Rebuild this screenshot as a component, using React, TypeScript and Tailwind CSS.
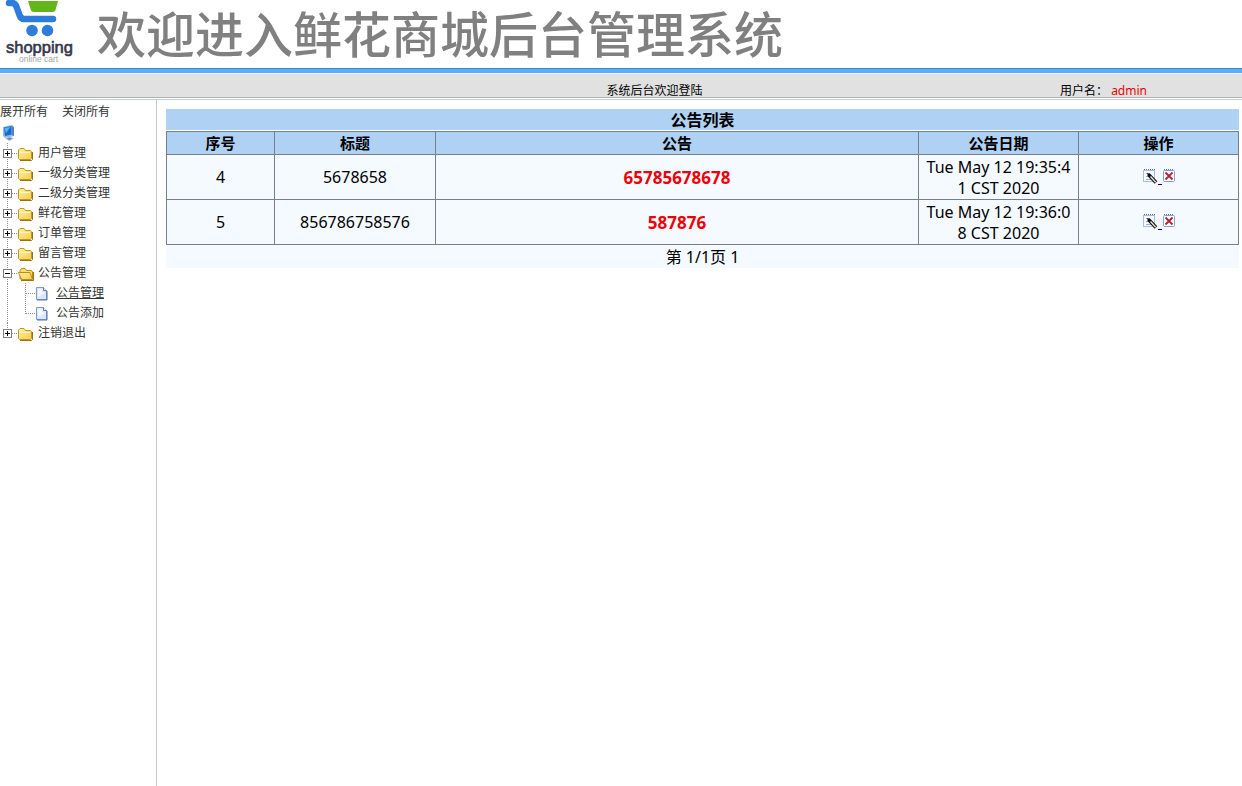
import { useState } from "react";

type Branch = { label: string; children?: { label: string; current?: boolean }[] };

const branches: Branch[] = [
  { label: "用户管理" },
  { label: "一级分类管理" },
  { label: "二级分类管理" },
  { label: "鲜花管理" },
  { label: "订单管理" },
  { label: "留言管理" },
  {
    label: "公告管理",
    children: [{ label: "公告管理", current: true }, { label: "公告添加" }],
  },
  { label: "注销退出" },
];

const notices = [
  { id: 4, title: "5678658", body: "65785678678", date: "Tue May 12 19:35:41 CST 2020" },
  { id: 5, title: "856786758576", body: "587876", date: "Tue May 12 19:36:08 CST 2020" },
];

function Logo() {
  return (
    <svg width="80" height="66" viewBox="0 0 80 66" role="img" aria-label="shopping online cart" className="shrink-0">
      <path d="M28 1H58L55.5 10Q55 12 52.500 12H34Q31.500 12 30.800 10Z" fill="#63b51c" />
      <path d="M9 3H12Q15 3 16.200 6L19.500 15Q20.700 19 24.500 19H53" fill="none" stroke="#2f7dda" strokeWidth="6.500" strokeLinecap="round" strokeLinejoin="round" />
      <circle cx="32" cy="30.500" r="5.800" fill="#2f7dda" />
      <circle cx="47.500" cy="30.500" r="5.800" fill="#2f7dda" />
      <text x="6" y="53" fontFamily="Liberation Sans, sans-serif" fontSize="16.5" fill="#33364d" stroke="#33364d" strokeWidth="0.600">shopping</text>
      <text x="19" y="61.500" fontFamily="Liberation Sans, sans-serif" fontSize="8.500" fill="#a4a4a8">online cart</text>
    </svg>
  );
}

function Computer() {
  return (
    <svg width="18" height="18" viewBox="0 0 18 18" aria-hidden="true">
      <path d="M5 15L9 12L14 14.500L10 17Z" fill="#b9c3cf" />
      <path d="M3 3L12 1L14 3V12L5 14L3 12Z" fill="#8eb9e8" />
      <path d="M4 3.500L11.500 2V10.500L5 12Z" fill="#1769d2" />
      <path d="M4.500 4L10.500 3L6 9Z" fill="#52b3fa" />
      <path d="M12 2L14 3.500V12L12 11Z" fill="#5683b6" />
      <path d="M7 14.500L10 13.500L12 14.500L9 16Z" fill="#6686a8" />
    </svg>
  );
}

function Connector({ open, last }: { open: boolean; last: boolean }) {
  return (
    <svg width="18" height="20" viewBox="0 0 18 20" aria-hidden="true" shapeRendering="crispEdges">
      <path d={last ? "M7.500 0V6" : "M7.500 0V20"} stroke="#909090" strokeDasharray="1 1" />
      <path d="M12 10.500H18" stroke="#909090" strokeDasharray="1 1" />
      <rect x="3.500" y="6.500" width="8" height="8" fill="#fff" stroke="#808080" />
      <path d={open ? "M5 10.500H10" : "M5 10.500H10M7.500 8V13"} stroke="#000" />
    </svg>
  );
}

function Folder({ open }: { open: boolean }) {
  return (
    <svg width="18" height="17" viewBox="0 0 18 17" aria-hidden="true" className="mt-[3px]">
      <defs>
        <linearGradient id="folder" x1="0" y1="0" x2="1" y2="1">
          <stop stopColor="#fff3a6" />
          <stop offset="1" stopColor="#f7ca48" />
        </linearGradient>
      </defs>
      {open ? (
        <>
          <path d="M2 13V4.500L3.500 2.500H7L8.500 4.500H13.500L14.500 6V13Z" fill="#f9dc6e" stroke="#b98a1b" />
          <path d="M0.500 6.500H12L14.500 13.500H3.500Z" fill="url(#folder)" stroke="#bd8d17" />
          <path d="M3 14.500H15.500V6" fill="none" stroke="#9b7411" />
        </>
      ) : (
        <>
          <path d="M0.500 12.500V4L2 2.500H6L7.500 4.500H12.500L13.500 5.500V12.500L12.500 13.500H1.500Z" fill="url(#folder)" stroke="#c39724" />
          <path d="M1.500 6.500H12" stroke="#fff7c2" />
          <path d="M2 14.500H13.500L14.500 13.500V6" fill="none" stroke="#947018" />
        </>
      )}
    </svg>
  );
}

function PageLeaf({ last }: { last: boolean }) {
  return (
    <svg width="32" height="20" viewBox="18 0 32 20" aria-hidden="true">
      <g shapeRendering="crispEdges" stroke="#909090" strokeDasharray="1 1">
        <path d={last ? "M25.500 0V11" : "M25.500 0V20"} />
        <path d="M26 10.500H36" />
      </g>
      <path d="M36.500 4.500H43.500L46.500 7.500V16.500H36.500Z" fill="#dce9fc" stroke="#7d99cf" />
      <path d="M38 6H42V9L45 10L38 14Z" fill="#f5f9ff" />
      <path d="M43.500 4.500V7.500H46.500" fill="#fff" stroke="#5a76af" />
      <path d="M37 17H47V8" fill="none" stroke="#5873ab" />
    </svg>
  );
}

function EditIcon() {
  return (
    <svg width="16" height="16" viewBox="0 0 16 16" aria-hidden="true">
      <rect x="1.500" y="2.500" width="11" height="11" fill="#f8fbff" stroke="#a9bbdf" />
      <path d="M2 1.500H13" stroke="#5873a9" strokeDasharray="1 1" />
      <path d="M4 5.500H8M4 8.500H7M4 11.500H9" stroke="#9eacc9" />
      <path d="M6.500 6.500L14 14.500" stroke="#111" strokeWidth="3.500" />
      <path d="M8.500 8.600L13.700 14.200" stroke="#e0e0d8" strokeWidth="1.500" />
      <path d="M5 5L8 6L6 8Z" fill="#111" />
    </svg>
  );
}

function DeleteIcon() {
  return (
    <svg width="14" height="16" viewBox="0 0 14 16" aria-hidden="true">
      <rect x="1.500" y="2.500" width="11" height="11" rx="1" fill="#fff" stroke="#87a0d4" />
      <path d="M2 1.500H12" stroke="#5873a9" strokeDasharray="1 1" />
      <path d="M3.500 4.500L10.500 11.500M10.500 4.500L3.500 11.500" stroke="#b72032" strokeWidth="1.800" />
    </svg>
  );
}

export default function App() {
  const [open, setOpen] = useState<string[]>(["公告管理"]);
  const toggle = (label: string) =>
    setOpen((now) => (now.includes(label) ? now.filter((l) => l !== label) : [...now, label]));

  return (
    <div className="flex min-h-screen flex-col bg-white font-['Noto_Sans','Noto_Sans_CJK_SC',sans-serif] text-black">
      <header>
        <div className="flex h-[68px]">
          <Logo />
          <h1 className="ml-[17px] whitespace-nowrap font-['Noto_Sans_CJK_SC',sans-serif] text-[49px] leading-[64px] font-medium text-[#808080]">
            欢迎进入鲜花商城后台管理系统
          </h1>
        </div>
        <div className="h-[5px] border-t border-[#4886c5] bg-[#5aaef5]" />
        <div className="grid h-[25px] grid-cols-[1fr_182px] border-t border-b border-t-[#eef3f6] border-b-[#b0b0b0] bg-[#e1e1e1] text-xs leading-[34px]">
          <p className="pl-[249px] text-center">系统后台欢迎登陆</p>
          <p>
            用户名： <span className="text-[#f00000]">admin</span>
          </p>
        </div>
        <div className="mt-px h-px bg-[#c8cdd0]" />
      </header>

      <div className="flex grow">
        <nav className="w-[157px] shrink-0 border-r border-[#c8c8c8] pt-1 text-xs text-[#333]">
          <div className="flex h-5 gap-3.5 leading-4">
            <button type="button" className="h-4" onClick={() => setOpen(branches.map((b) => b.label))}>展开所有</button>
            <button type="button" className="h-4" onClick={() => setOpen([])}>关闭所有</button>
          </div>
          <Computer />
          <ul className="pt-px">
            {branches.map((branch, i) => {
              const expanded = open.includes(branch.label);
              return (
                <li key={branch.label}>
                  <div className="flex h-5">
                    <button type="button" aria-label={branch.label} aria-expanded={expanded} onClick={() => toggle(branch.label)}>
                      <Connector open={expanded} last={i === branches.length - 1} />
                    </button>
                    <Folder open={expanded} />
                    <a href="#" className="ml-0.5 leading-5">{branch.label}</a>
                  </div>
                  {expanded && branch.children && (
                    <ul className="ml-[7px] border-l border-dotted border-[#909090] pl-2.5">
                      {branch.children.map((leaf, j) => (
                        <li key={leaf.label} className="flex h-5">
                          <PageLeaf last={j === branch.children!.length - 1} />
                          <a href="#" className={leaf.current ? "ml-1.5 leading-5 underline" : "ml-1.5 leading-5"}>
                            {leaf.label}
                          </a>
                        </li>
                      ))}
                    </ul>
                  )}
                </li>
              );
            })}
          </ul>
        </nav>

        <main className="min-w-0 grow pt-[9px] pr-[3px] pl-[9px]">
          <h2 className="mb-px h-[21px] bg-[#afd1f3] text-center leading-[22px] font-bold">公告列表</h2>
          <table className="w-full table-fixed border-collapse bg-[#f4faff] text-center">
            <thead>
              <tr className="h-[23px] bg-[#afd1f3] text-[15px] leading-[22px]">
                <th className="w-[108px] border border-[#778088] p-0">序号</th>
                <th className="w-[161px] border border-[#778088] p-0">标题</th>
                <th className="border border-[#778088] p-0">公告</th>
                <th className="w-[160px] border border-[#778088] p-0">公告日期</th>
                <th className="w-[160px] border border-[#778088] p-0">操作</th>
              </tr>
            </thead>
            <tbody>
              {notices.map((n) => (
                <tr key={n.id} className="h-[45px] leading-[21px]">
                  <td className="border border-[#778088] p-0">{n.id}</td>
                  <td className="border border-[#778088] p-0">{n.title}</td>
                  <td className="border border-[#778088] p-0 text-[17px] font-bold text-[#ee0008]">{n.body}</td>
                  <td className="border border-[#778088] px-1 pt-0.5 break-all">{n.date}</td>
                  <td className="border border-[#778088] p-0">
                    <div className="flex items-center justify-center pb-0.5 leading-4">
                      <a href="#" aria-label="编辑" className="flex text-[#000080]">
                        <EditIcon />
                        <span className="h-[17px] w-1 border-b border-[#000080]" />
                      </a>
                      <a href="#" aria-label="删除"><DeleteIcon /></a>
                    </div>
                  </td>
                </tr>
              ))}
            </tbody>
          </table>
          <p className="h-[23px] bg-[#f4faff] text-center leading-6">第 1/1页 1</p>
        </main>
      </div>
    </div>
  );
}
